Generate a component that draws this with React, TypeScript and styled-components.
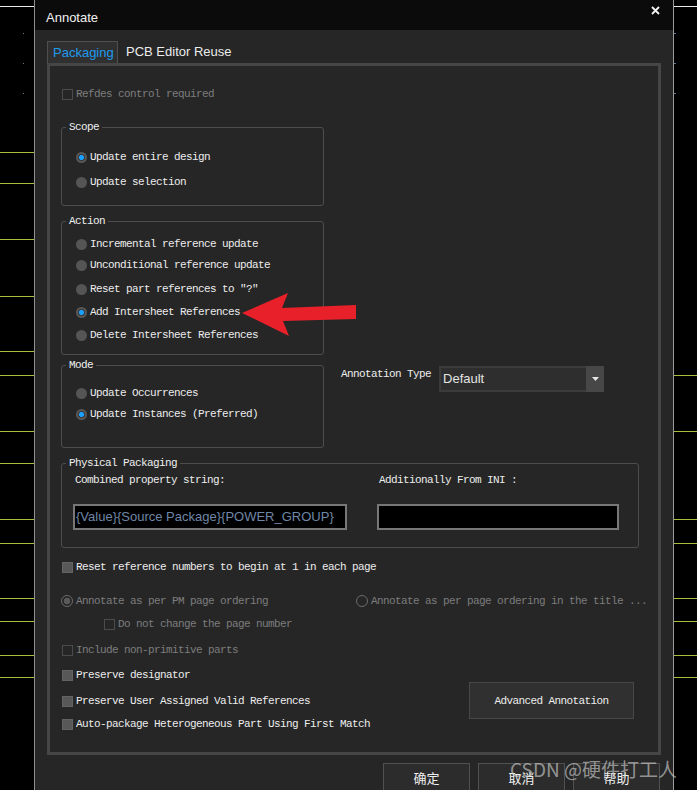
import React from "react";
import styled, { createGlobalStyle, css } from "styled-components";

const MONO = `"Liberation Mono", "Noto Sans CJK SC", monospace`;
const SANS = `"Liberation Sans", Arial, "Noto Sans CJK SC", sans-serif`;

const GlobalStyle = createGlobalStyle`
  html, body {
    margin: 0;
    padding: 0;
    background: #000;
  }
  body {
    font-family: ${SANS};
  }
`;

const Page = styled.div`
  position: relative;
  display: flex;
  align-items: flex-start;
  width: 697px;
  height: 790px;
  overflow: hidden;
  background: #000;
`;

const Strip = styled.div<{ $side: "left" | "right" }>`
  flex: 1 0 auto;
  height: 790px;
  width: ${(p) => (p.$side === "left" ? "34px" : "23px")};
  ${(p) =>
    p.$side === "left"
      ? css`border-right: 1px solid #8e8e8e;`
      : css`border-left: 1px solid #9a9a9a;`}
  svg {
    display: block;
  }
`;

const Dialog = styled.div`
  flex: 0 0 638px;
  display: flex;
  flex-direction: column;
  background: #262626;
  min-height: 790px;
`;

const TitleBar = styled.div`
  flex: 0 0 30px;
  display: flex;
  justify-content: space-between;
  align-items: flex-start;
  height: 30px;
  padding: 0 13px 0 11px;
  background: #0b0b0b;
  color: #f2f2f2;
  font-size: 13px;

  span {
    margin-top: 10px;
    line-height: 16px;
  }
  svg {
    margin-top: 6px;
  }
`;

const Body = styled.div`
  flex: 0 0 auto;
  padding: 11px 12px 0 12px;
`;

const TabBar = styled.div`
  display: flex;
  height: 22px;
`;

const Tab = styled.div<{ $active?: boolean }>`
  box-sizing: border-box;
  height: 22px;
  line-height: 22px;
  font-size: 13px;
  ${(p) =>
    p.$active
      ? css`
          width: 71px;
          padding-left: 5px;
          color: #1e9bef;
          background: #303030;
          border: 1px solid #4f4f4f;
          border-bottom: none;
          line-height: 21px;
        `
      : css`
          padding-left: 8px;
          color: #ececec;
        `}
`;

const Panel = styled.div`
  box-sizing: border-box;
  height: 692px;
  border: 3px solid #464646;
  padding: 0 0 0 11px;
  display: flex;
  flex-direction: column;
  align-items: flex-start;
`;

const Group = styled.fieldset<{ $w: number; $h: number; $mt: number }>`
  box-sizing: border-box;
  flex: 0 0 auto;
  width: ${(p) => p.$w}px;
  height: ${(p) => p.$h}px;
  margin: ${(p) => p.$mt}px 0 0 0;
  padding: 0 4px;
  min-width: 0;
  border: 1px solid #4d4d4d;
  border-radius: 3px;
`;

const Legend = styled.legend`
  padding: 0 3px;
  font-family: ${MONO};
  font-size: 11px;
  letter-spacing: -0.6px;
  line-height: 14px;
  color: #efefef;
  white-space: pre;
`;

const OptionList = styled.div`
  padding-left: 10px;
  display: flex;
  flex-direction: column;
  align-items: flex-start;
`;

const Row = styled.div<{ $mt?: number; $ml?: number; $w?: number }>`
  display: flex;
  align-items: center;
  gap: 3px;
  height: 14px;
  margin-top: ${(p) => p.$mt ?? 0}px;
  margin-left: ${(p) => p.$ml ?? 0}px;
  ${(p) => p.$w && css`width: ${p.$w}px;`}
  flex: 0 0 auto;
`;

const Text = styled.span<{ $off?: boolean }>`
  font-family: ${MONO};
  font-size: 11px;
  letter-spacing: -0.6px;
  line-height: 14px;
  white-space: pre;
  color: ${(p) => (p.$off ? "#7d7d7d" : "#ededed")};
`;

type Kind = "radio" | "check";

const Mark = styled.span<{ $kind: Kind; $on?: boolean; $off?: boolean }>`
  box-sizing: border-box;
  flex: 0 0 auto;
  width: 11px;
  height: 11px;
  ${(p) =>
    p.$kind === "radio"
      ? p.$off
        ? css`
            width: 12px;
            height: 12px;
            border-radius: 50%;
            border: 1px solid #6b6b6b;
            background: ${p.$on
              ? "radial-gradient(circle, #5a5a5a 0 3px, transparent 3.6px)"
              : "transparent"};
          `
        : css`
            border-radius: 50%;
            background: ${p.$on
              ? "radial-gradient(circle, #1aa0ff 0 2.2px, #3b3b3b 2.8px 3.4px, #575757 3.9px)"
              : "#555"};
          `
      : p.$off
      ? css`
          border: 1px solid #4b4b4b;
        `
      : css`
          border: 1px solid #636363;
          background: #585858;
        `}
`;

const Option = ({
  kind,
  label,
  on,
  off,
  mt,
  ml,
  w,
}: {
  kind: Kind;
  label: string;
  on?: boolean;
  off?: boolean;
  mt?: number;
  ml?: number;
  w?: number;
}) => (
  <Row $mt={mt} $ml={ml} $w={w}>
    <Mark $kind={kind} $on={on} $off={off} />
    <Text $off={off}>{label}</Text>
  </Row>
);

const ModeRow = styled.div`
  display: flex;
  align-items: flex-start;
  margin-top: 3px;
`;

const TypeLabel = styled(Text)`
  margin: 9px 0 0 17px;
`;

const Select = styled.div`
  box-sizing: border-box;
  display: flex;
  width: 165px;
  height: 26px;
  margin: 8px 0 0 8px;
  padding: 2px 0 2px 2px;
  background: #3b3b3b;
`;

const SelectValue = styled.div`
  flex: 1;
  padding-left: 2px;
  background: #2e2e2e;
  color: #e4e4e4;
  font-size: 13px;
  line-height: 22px;
`;

const SelectArrow = styled.div`
  width: 18px;
  display: flex;
  align-items: center;
  justify-content: center;
  background: #474747;
  margin: -2px 0;
  svg {
    display: block;
  }
`;

const FieldGrid = styled.div`
  display: grid;
  grid-template-columns: 274px 242px;
  column-gap: 30px;
  padding-left: 7px;
`;

const FieldLabel = styled(Text)`
  display: block;
  margin: 3px 0 0 2px;
`;

const Input = styled.div`
  box-sizing: border-box;
  height: 26px;
  margin-top: 17px;
  border: 2px solid #777;
  background: #000;
  color: #6f87a6;
  font-size: 13px;
  line-height: 22px;
  padding-left: 1px;
  white-space: nowrap;
  overflow: hidden;
`;

const OrderRow = styled.div`
  display: flex;
  margin-top: 20px;
`;

const BottomBlock = styled.div`
  align-self: stretch;
  display: flex;
  justify-content: space-between;
  margin-right: 24px;
`;

const CheckColumn = styled.div`
  display: flex;
  flex-direction: column;
  padding-top: 12px;
`;

const AdvancedButton = styled.div`
  box-sizing: border-box;
  width: 165px;
  height: 37px;
  display: flex;
  align-items: center;
  justify-content: center;
  background: #303030;
  border: 1px solid #474747;
`;

const ButtonRow = styled.div`
  display: flex;
  justify-content: flex-end;
  gap: 8px;
  margin-top: 8px;
  padding-right: 1px;
`;

const DialogButton = styled.div`
  box-sizing: border-box;
  width: 87px;
  height: 32px;
  padding-top: 5px;
  text-align: center;
  background: #2c2c2c;
  border: 1px solid #505050;
  color: #f0f0f0;
  font-family: "Noto Sans CJK SC", sans-serif;
  font-size: 13px;
  line-height: 18px;
`;

const Watermark = styled.div`
  position: absolute;
  left: 510px;
  top: 756px;
  font-family: "Noto Sans CJK SC", "Liberation Sans", sans-serif;
  font-size: 19px;
  line-height: 26px;
  color: rgba(215, 215, 215, 0.62);
  white-space: nowrap;
  pointer-events: none;
`;

const Arrow = styled.svg`
  position: absolute;
  left: 0;
  top: 0;
  pointer-events: none;
`;

const leftLines = [152, 183, 239, 296, 351, 375, 431, 463, 519, 543, 598, 621, 655, 677];
const rightLines = [375, 431, 519, 543, 598, 621, 655, 677];

const CanvasLines = ({ width, lines, side }: { width: number; lines: number[]; side: "left" | "right" }) => (
  <svg width={width} height={790}>
    <line x1={0} y1={6.5} x2={width} y2={6.5} stroke="#e8e8e8" />
    {lines.map((y) => (
      <line key={y} x1={0} y1={y + 0.5} x2={width} y2={y + 0.5} stroke="#a9bd3c" />
    ))}
    {[33, 63, 93].map((y) =>
      side === "left" ? (
        <rect key={y} x={23} y={y} width={1} height={1} fill="#777" />
      ) : (
        <rect key={y} x={0} y={y} width={2} height={1} fill="#5d7a99" />
      )
    )}
  </svg>
);

const App = () => {
  return (
    <>
      <GlobalStyle />
      <Page>
        <Strip $side="left">
          <CanvasLines width={34} lines={leftLines} side="left" />
        </Strip>
        <Dialog>
          <TitleBar>
            <span>Annotate</span>
            <svg width="9" height="9" viewBox="0 0 9 9">
              <path d="M1 1 L8 8 M8 1 L1 8" stroke="#f4f4f4" strokeWidth="1.8" />
            </svg>
          </TitleBar>
          <Body>
            <TabBar>
              <Tab $active>Packaging</Tab>
              <Tab>PCB Editor Reuse</Tab>
            </TabBar>
            <Panel>
              <Option kind="check" off label="Refdes control required" mt={21} ml={1} />

              <Group $w={263} $h={86} $mt={19}>
                <Legend>Scope</Legend>
                <OptionList>
                  <Option kind="radio" on label="Update entire design" mt={16} />
                  <Option kind="radio" label="Update selection" mt={11} />
                </OptionList>
              </Group>

              <Group $w={263} $h={141} $mt={8}>
                <Legend>Action</Legend>
                <OptionList>
                  <Option kind="radio" label="Incremental reference update" mt={9} />
                  <Option kind="radio" label="Unconditional reference update" mt={7} />
                  <Option kind="radio" label={'Reset part references to "?"'} mt={10} />
                  <Option kind="radio" on label="Add Intersheet References" mt={9} />
                  <Option kind="radio" label="Delete Intersheet References" mt={9} />
                </OptionList>
              </Group>

              <ModeRow>
                <Group $w={263} $h={90} $mt={0}>
                  <Legend>Mode</Legend>
                  <OptionList>
                    <Option kind="radio" label="Update Occurrences" mt={14} />
                    <Option kind="radio" on label="Update Instances (Preferred)" mt={7} />
                  </OptionList>
                </Group>
                <TypeLabel>Annotation Type</TypeLabel>
                <Select>
                  <SelectValue>Default</SelectValue>
                  <SelectArrow>
                    <svg width="7" height="4" viewBox="0 0 7 4">
                      <path d="M0 0 H7 L3.5 4 Z" fill="#e6e6e6" />
                    </svg>
                  </SelectArrow>
                </Select>
              </ModeRow>

              <Group $w={578} $h={92} $mt={8}>
                <Legend>Physical Packaging</Legend>
                <FieldGrid>
                  <div>
                    <FieldLabel>Combined property string:</FieldLabel>
                    <Input>{"{Value}{Source Package}{POWER_GROUP}"}</Input>
                  </div>
                  <div>
                    <FieldLabel>Additionally From INI :</FieldLabel>
                    <Input />
                  </div>
                </FieldGrid>
              </Group>

              <Option kind="check" label="Reset reference numbers to begin at 1 in each page" mt={12} ml={1} />

              <OrderRow>
                <Option kind="radio" off on label="Annotate as per PM page ordering" w={295} />
                <Option kind="radio" off label="Annotate as per page ordering in the title ..." />
              </OrderRow>
              <Option kind="check" off label="Do not change the page number" mt={9} ml={43} />
              <Option kind="check" off label="Include non-primitive parts" mt={12} ml={1} />
              <Option kind="check" label="Preserve designator" mt={11} ml={1} />

              <BottomBlock>
                <CheckColumn>
                  <Option kind="check" label="Preserve User Assigned Valid References" ml={1} />
                  <Option kind="check" label="Auto-package Heterogeneous Part Using First Match" mt={9} ml={1} />
                </CheckColumn>
                <AdvancedButton>
                  <Text>Advanced Annotation</Text>
                </AdvancedButton>
              </BottomBlock>
            </Panel>
            <ButtonRow>
              <DialogButton>确定</DialogButton>
              <DialogButton>取消</DialogButton>
              <DialogButton>帮助</DialogButton>
            </ButtonRow>
          </Body>
        </Dialog>
        <Strip $side="right">
          <CanvasLines width={23} lines={rightLines} side="right" />
        </Strip>
        <Arrow width={697} height={790}>
          <path
            d="M242 313 L288 293 L282 308 L356 305 L356 319 L283 321 L289 336 Z"
            fill="#e8202a"
          />
        </Arrow>
        <Watermark>CSDN @硬件打工人</Watermark>
      </Page>
    </>
  );
};

export default App;
